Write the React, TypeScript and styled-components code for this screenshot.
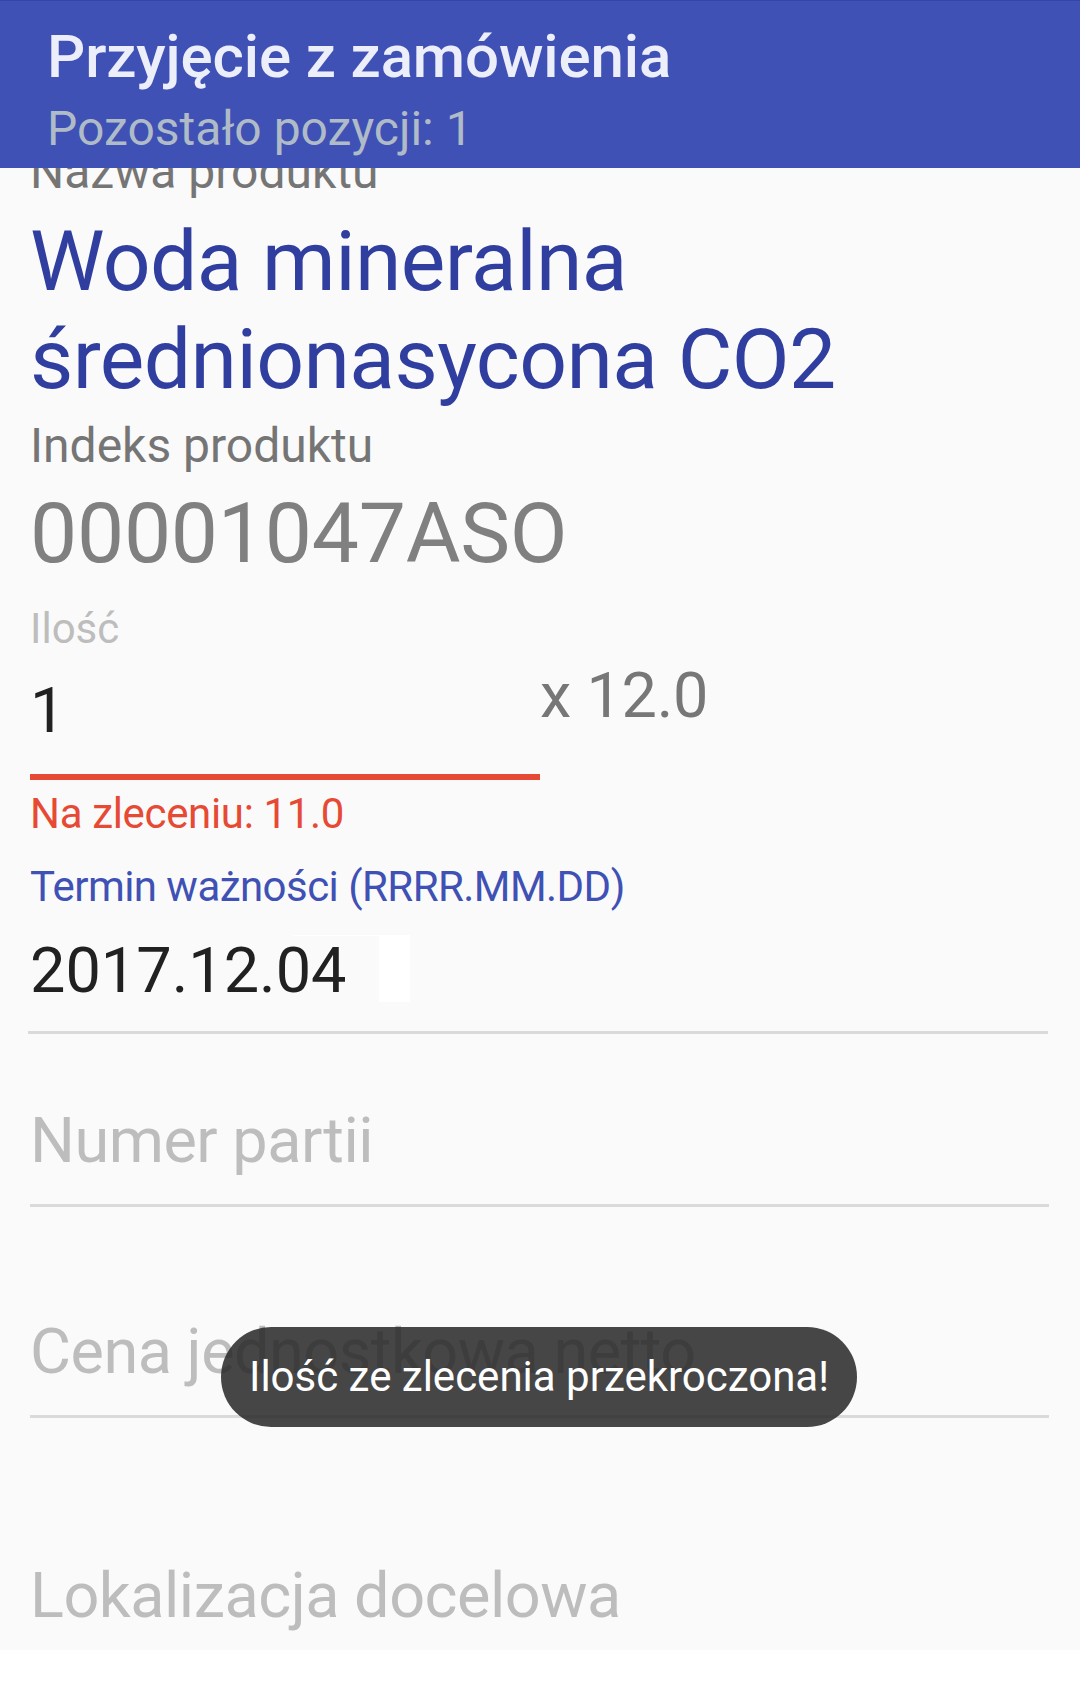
import React from "react";
import styled, { createGlobalStyle } from "styled-components";

const GlobalStyle = createGlobalStyle`
  html, body { margin: 0; padding: 0; background: #ffffff; }
  body { font-family: Roboto, "Noto Sans", "Liberation Sans", sans-serif; }
  * { box-sizing: border-box; }
`;

const Screen = styled.div`
  position: relative;
  width: 1080px;
  height: 1702px;
  overflow: hidden;
  background: #ffffff;
  display: flex;
  flex-direction: column;
`;

const AppBar = styled.header`
  flex: 0 0 168px;
  height: 168px;
  background: #3f51b5;
  border-top: 1px solid #3446a6;
  padding: 20.5px 0 0 47px;
  display: flex;
  flex-direction: column;
  position: relative;
  z-index: 2;
`;

const Title = styled.div`
  font-size: 60px;
  line-height: 70px;
  font-weight: 500;
  letter-spacing: -0.002em;
  color: #eceefa;
  white-space: nowrap;
`;

const Subtitle = styled.div`
  margin-top: 9px;
  font-size: 48px;
  line-height: 56px;
  color: #b0bbc8;
  white-space: nowrap;
`;

const Content = styled.main`
  flex: 0 0 1482px;
  height: 1482px;
  background: #fafafa;
  overflow: hidden;
`;

const Form = styled.div`
  margin-top: -24.4px;
  padding: 0 30px 0 30px;
  display: flex;
  flex-direction: column;
  align-items: flex-start;
`;

const Label = styled.div<{ $gap: number; $color: string; $size: number; $lh: number; $ls?: number }>`
  margin-top: ${(p) => p.$gap}px;
  font-size: ${(p) => p.$size}px;
  line-height: ${(p) => p.$lh}px;
  letter-spacing: ${(p) => p.$ls ?? 0}em;
  color: ${(p) => p.$color};
  white-space: nowrap;
`;

const ProductName = styled.div`
  margin-top: 13.7px;
  font-size: 84px;
  line-height: 98px;
  letter-spacing: -0.007em;
  color: #303f9f;
  width: 1000px;
`;

const QtyRow = styled.div`
  display: flex;
  align-items: flex-start;
`;

const QtyInput = styled.div`
  width: 510px;
  padding-top: 21.3px;
  padding-bottom: 25.6px;
  border-bottom: 6px solid #e64a35;
  font-size: 63px;
  line-height: 74px;
  color: #212121;
`;

const Multiplier = styled.div`
  margin-top: 6.4px;
  font-size: 63px;
  line-height: 74px;
  letter-spacing: -0.004em;
  color: #777777;
  white-space: nowrap;
`;

const Field = styled.div<{ $gap: number; $color: string }>`
  position: relative;
  margin-top: ${(p) => p.$gap}px;
  margin-left: -2px;
  width: 1020px;
  padding-left: 2px;
  padding-bottom: 22.6px;
  border-bottom: 3px solid #dadada;
  font-size: 63px;
  line-height: 74px;
  color: ${(p) => p.$color};
  white-space: nowrap;
`;

const HintField = styled(Field)`
  margin-left: 0;
  padding-left: 0;
  width: 1019px;
  padding-bottom: 25.6px;
  letter-spacing: -0.008em;
`;

const CursorHandle = styled.span`
  position: absolute;
  left: 351px;
  top: 0.6px;
  width: 31px;
  height: 67px;
  background: #ffffff;
`;

const CursorLine = styled.span`
  position: absolute;
  left: 265px;
  top: 0.6px;
  width: 90px;
  height: 1px;
  background: #ffffff;
`;

const Footer = styled.div`
  flex: 1 1 auto;
  background: #ffffff;
`;

const Toast = styled.div`
  position: absolute;
  left: 221px;
  top: 1327px;
  width: 636px;
  height: 100px;
  border-radius: 50px;
  background: rgba(40, 40, 40, 0.86);
  color: #ffffff;
  font-size: 42px;
  line-height: 100px;
  text-align: center;
  white-space: nowrap;
  z-index: 3;
`;

export default function App() {
  return (
    <>
      <GlobalStyle />
      <Screen>
        <AppBar>
          <Title>Przyjęcie z zamówienia</Title>
          <Subtitle>Pozostało pozycji: 1</Subtitle>
        </AppBar>
        <Content>
          <Form>
            <Label $gap={0} $color="#757575" $size={48} $lh={56}>
              Nazwa produktu
            </Label>
            <ProductName>Woda mineralna średnionasycona CO2</ProductName>
            <Label $gap={8.3} $color="#757575" $size={48} $lh={56}>
              Indeks produktu
            </Label>
            <Label $gap={11.7} $color="#808080" $size={84} $lh={98} $ls={-0.003}>
              00001047ASO
            </Label>
            <Label $gap={20.8} $color="#bdbdbd" $size={42} $lh={49}>
              Ilość
            </Label>
            <QtyRow>
              <QtyInput>1</QtyInput>
              <Multiplier>x 12.0</Multiplier>
            </QtyRow>
            <Label $gap={9.1} $color="#e64a35" $size={42} $lh={49} $ls={-0.008}>
              Na zleceniu: 11.0
            </Label>
            <Label $gap={24} $color="#3f51b5" $size={42} $lh={49} $ls={-0.013}>
              Termin ważności (RRRR.MM.DD)
            </Label>
            <Field $gap={23.3} $color="#212121">
              2017.12.04
              <CursorLine />
              <CursorHandle />
            </Field>
            <HintField $gap={70.4} $color="#bdbdbd">
              Numer partii
            </HintField>
            <HintField $gap={108.4} $color="#bdbdbd">
              Cena jednostkowa netto
            </HintField>
            <HintField $gap={141.4} $color="#bdbdbd">
              Lokalizacja docelowa
            </HintField>
          </Form>
        </Content>
        <Footer />
        <Toast>Ilość ze zlecenia przekroczona!</Toast>
      </Screen>
    </>
  );
}
